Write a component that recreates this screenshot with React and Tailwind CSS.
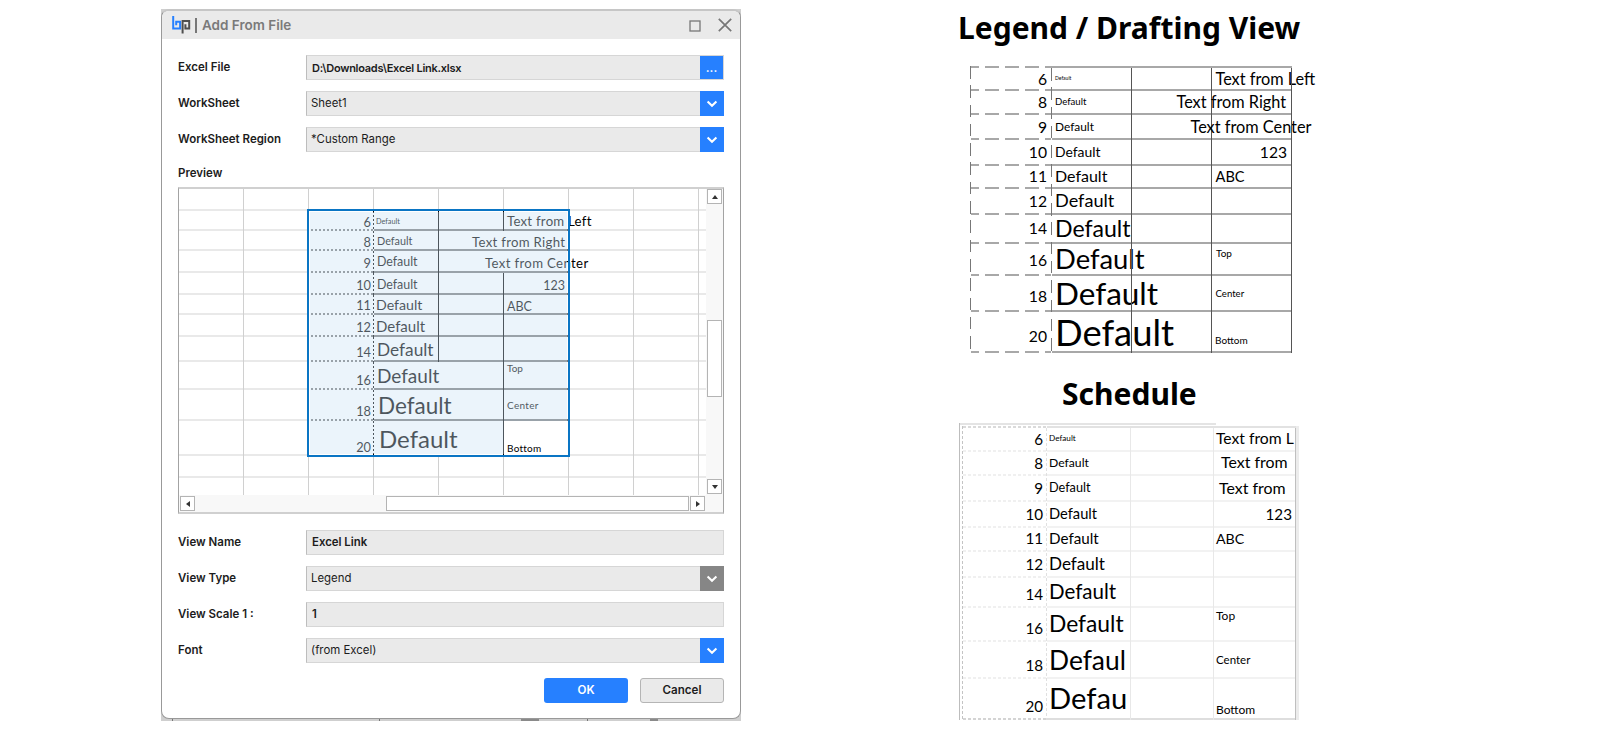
import React from "react";

/* ---------- generic sheet pieces ---------- */

// cell: { t: text, b: height class that sets the baseline, s: text classes }
function Cell({ h, hline, vline, cell }) {
  return (
    <div className={`flex shrink-0 ${h}`}>
      <div className="flex min-w-0 grow flex-col">
        <div className="flex min-h-0 grow items-baseline whitespace-nowrap leading-[0]">
          {cell && (
            <>
              <i className={`block w-0 shrink-0 ${cell.b}`} />
              <span className={`block shrink-0 ${cell.s}`}>{cell.t}</span>
            </>
          )}
        </div>
        <div className={`h-[2px] shrink-0 ${hline}`} />
      </div>
      {vline && <div className={`w-px shrink-0 ${vline}`} />}
    </div>
  );
}

function Column({ w, rows, cells = [], hline, vline, edge }) {
  const pick = (v, i) => (typeof v === "function" ? v(i) : v);
  return (
    <div className={`flex shrink-0 ${w}`}>
      <div className="flex min-w-0 grow flex-col">
        {rows.map((h, i) => (
          <Cell key={i} h={h} hline={pick(hline, i)} vline={pick(vline, i)} cell={cells[i]} />
        ))}
      </div>
      {edge && <div className={`w-px shrink-0 ${edge}`} />}
    </div>
  );
}

const NUM = ["6", "8", "9", "10", "11", "12", "14", "16", "18", "20"];
const build = (texts, bases, styles) =>
  texts.map((t, i) => (t ? { t, b: bases[i], s: Array.isArray(styles) ? styles[i] : styles } : null));

/* ---------- dialog preview ---------- */

const pRows = [
  "h-[22px]", "h-[20px]", "h-[20px]", "h-[22px]", "h-[22px]", "h-[20px]", "h-[22px]",
  "h-[25px]", "h-[28px]", "h-[31px]", "h-[35px]", "h-[22px]", "h-[17px]",
];
const pNums = [null, ...build(NUM,
  ["h-[16px]", "h-[16px]", "h-[17px]", "h-[17px]", "h-[15px]", "h-[17px]", "h-[20px]", "h-[23px]", "h-[26px]", "h-[31px]"],
  "ml-auto pr-[2px] text-[12.8px]")];
const pDefaults = [null, ...build(NUM.map(() => "Default"),
  ["h-[13px]", "h-[14px]", "h-[15px]", "h-[16px]", "h-[15px]", "h-[17px]", "h-[19px]", "h-[21px]", "h-[24px]", "h-[27px]"],
  [
    "pl-[2px] text-[7.3px]", "pl-[3px] text-[10.8px]", "pl-[3px] text-[12.4px]", "pl-[3px] text-[12.4px]",
    "pl-[2px] text-[14.2px]", "pl-[2px] text-[15px]", "pl-[3px] text-[17.3px]", "pl-[3px] text-[19px]",
    "pl-[4px] text-[22.5px]", "pl-[5px] text-[24px]",
  ])];
const pTexts = [null, ...build(
  ["Text from Left", "Text from Right", "Text from Center", "123", "ABC", "", "", "Top", "Center", "Bottom"],
  ["h-[15px]", "h-[16px]", "h-[17px]", "h-[17px]", "h-[16px]", "", "", "h-[10px]", "h-[19px]", "h-[31px]"],
  [
    "pl-[3px] text-[13.2px] tracking-[0.25px]",
    "ml-[-32px] text-[13.2px] tracking-[0.3px]",
    "ml-[-19px] text-[13.2px] tracking-[0.35px]",
    "ml-auto pr-[3px] text-[12.5px]",
    "pl-[3px] text-[12.5px]",
    "", "",
    "pl-[3px] text-[10px]",
    "pl-[3px] text-[10px] tracking-[0.3px]",
    "pl-[3px] text-[10px] tracking-[0.25px]",
  ])];

const gridV = "bg-[#d0d0d0]";
const gridH = "bg-[#e9e9e9]";
const solidH = "bg-[#7b7b7b]";
const dotH = "ml-[2px] bg-[repeating-linear-gradient(90deg,#7b7b7b_0_2px,transparent_2px_4px)]";
const dotV = "bg-[repeating-linear-gradient(180deg,#000_0_2px,transparent_2px_4px)]";
const inData = (i) => i >= 1 && i <= 10;
const blankLine = (i) => (i < 12 ? gridH : "");
const dataLine = (i) => (i >= 1 && i <= 9 ? solidH : i === 10 ? "" : blankLine(i));

function ScrollButton({ d }) {
  return (
    <div className="flex size-[15px] shrink-0 items-center justify-center border border-[#b4b4b4] bg-white">
      <svg viewBox="0 0 8 8" className="size-2 fill-[#333]">
        <path d={d} />
      </svg>
    </div>
  );
}

function Preview() {
  return (
    <div className="flex h-[327px] flex-col border-x border-y-2 border-x-[#a3a3a3] border-y-[#d0d0d0]">
      <div className="flex h-[306px]">
        <div className="relative flex w-[527px] overflow-hidden font-[Lato,sans-serif] text-black">
          <Column w="w-[65px]" rows={pRows} hline={blankLine} edge={gridV} />
          <Column w="w-[65px]" rows={pRows} hline={blankLine} edge={gridV} />
          <Column
            w="w-[65px]" rows={pRows} cells={pNums}
            hline={(i) => (i >= 1 && i <= 9 ? dotH : i === 10 ? "" : blankLine(i))}
            vline={(i) => (inData(i) ? dotV : gridV)}
          />
          <Column
            w="w-[65px]" rows={pRows} cells={pDefaults} hline={dataLine}
            vline={(i) => (i >= 1 && i <= 7 ? "bg-black" : inData(i) ? null : gridV)}
          />
          <Column
            w="w-[65px]" rows={pRows} hline={dataLine}
            vline={(i) => (i === 2 || i === 3 ? null : inData(i) ? "bg-black" : gridV)}
          />
          <Column
            w="w-[65px]" rows={pRows} cells={pTexts} hline={dataLine}
            vline={(i) => (inData(i) ? "bg-transparent" : gridV)}
          />
          <Column w="w-[65px]" rows={pRows} hline={blankLine} edge={gridV} />
          <Column w="w-[65px]" rows={pRows} hline={blankLine} edge={gridV} />
          <Column w="w-[7px]" rows={pRows} hline={blankLine} />
          <div className="absolute top-[20px] left-[128px] flex h-[248px] w-[263px] flex-col border-2 border-[#0a75c4] p-px">
            <div className="grow bg-[rgba(203,225,245,0.38)]" />
            <div className="h-[33px] w-[194px] bg-[rgba(203,225,245,0.38)]" />
          </div>
        </div>
        <div className="flex w-[17px] flex-col items-center bg-[#f8f8f8] pb-px">
          <ScrollButton d="M4 2 7 6H1z" />
          <div className="mt-[116px] h-[77px] w-[15px] border border-[#b4b4b4] bg-white" />
          <div className="grow" />
          <ScrollButton d="M4 6 1 2h6z" />
        </div>
      </div>
      <div className="flex h-[17px] items-center bg-[#f8f8f8] pl-px">
        <ScrollButton d="M2 4 6 1v6z" />
        <div className="ml-[191px] h-[15px] w-[303px] border border-[#b4b4b4] bg-white" />
        <div className="w-px" />
        <ScrollButton d="M6 4 2 1v6z" />
      </div>
    </div>
  );
}

/* ---------- dialog ---------- */

function Chevron() {
  return (
    <svg viewBox="0 0 12 8" className="h-2 w-3 fill-none stroke-white stroke-[2.1]">
      <path d="M1.6 1.6 6 5.8l4.4-4.2" />
    </svg>
  );
}

function Row({ label, value, bold, button, valueClass = "pl-[5px] text-[11.4px]" }) {
  return (
    <div className="flex h-[25px] items-center">
      <div className="w-[128px] shrink-0 pt-px text-[11.5px] font-semibold text-[#1c1c1c]">{label}</div>
      <div className="flex h-[25px] grow border border-[#d6d6d6] border-l-[#bdbdbd] bg-[#eaeaea]">
        <div className={`flex grow items-center pt-px text-[#1c1c1c] ${bold ? "font-semibold" : ""} ${valueClass}`}>
          {value}
        </div>
        {button === "dots" && (
          <div className="flex h-[23px] w-[23px] items-center justify-center bg-[#2680ff] text-[12px] font-semibold text-white">
            ...
          </div>
        )}
        {button === "blue" && (
          <div className="-my-px -mr-px flex w-6 items-center justify-center bg-[#2680ff]">
            <Chevron />
          </div>
        )}
        {button === "gray" && (
          <div className="-my-px -mr-px flex w-6 items-center justify-center bg-[#868686]">
            <Chevron />
          </div>
        )}
      </div>
    </div>
  );
}

function Logo() {
  return (
    <svg viewBox="0 0 19 18" className="h-[18px] w-[19px] fill-none">
      <path d="M1.2 0v12.6h6.9V5.7H4.2v3.6" stroke="#2680ff" strokeWidth="2" />
      <path d="M10.6 17.5V5h6.6v7.4h-3.8V8.2" stroke="#4f4f4f" strokeWidth="2" />
    </svg>
  );
}

const plain = "pl-1 text-[11.4px]";

function Dialog() {
  return (
    <div className="flex h-[712px] w-[580px] flex-col bg-[#cfcfcf] font-[Inter,sans-serif]">
      <div className="flex h-[710px] flex-col overflow-hidden rounded-[8px] border border-t-2 border-[#999] border-t-[#c6c6c6] bg-white">
        <div className="flex h-[28px] shrink-0 items-center bg-[#eaeaea] pl-[10px] pr-[8px]">
          <Logo />
          <div className="ml-[4px] h-[15px] w-[1.5px] bg-[#777]" />
          <div className="ml-[5.5px] grow pt-px text-[13.5px] leading-none font-semibold text-[#7a7a7a]">Add From File</div>
          <svg viewBox="0 0 12 12" className="mt-px size-3 fill-none stroke-[#777] stroke-[1.3]">
            <rect x="1" y="1" width="10" height="10" />
          </svg>
          <svg viewBox="0 0 14 14" className="-mt-px ml-[17px] size-[14px] fill-none stroke-[#777] stroke-[1.7]">
            <path d="M.8.8 13.2 13.2M13.2.8.8 13.2" />
          </svg>
        </div>
        <div className="flex flex-col px-4 pt-4">
          <div className="flex flex-col gap-[11px]">
            <Row label="Excel File" value="D:\Downloads\Excel Link.xlsx" bold button="dots" valueClass="pl-[5px] text-[11px] tracking-[-0.25px]" />
            <Row label="WorkSheet" value="Sheet1" button="blue" valueClass={plain} />
            <Row label="WorkSheet Region" value="*Custom Range" button="blue" valueClass={plain} />
          </div>
          <div className="flex h-[35px] items-center pt-[9px] text-[11.5px] font-semibold text-[#1c1c1c]">Preview</div>
          <Preview />
          <div className="mt-4 flex flex-col gap-[11px]">
            <Row label="View Name" value="Excel Link" bold />
            <Row label="View Type" value="Legend" button="gray" valueClass={plain} />
            <Row label="View Scale 1 :" value="1" bold />
            <Row label="Font" value="(from Excel)" button="blue" valueClass={plain} />
          </div>
          <div className="mt-[15px] flex justify-end gap-3">
            <button className="h-[25px] w-[84px] rounded-[3px] bg-[#2680ff] text-[11.6px] font-semibold text-white">OK</button>
            <button className="h-[25px] w-[84px] rounded-[3px] border border-[#b5b5b5] bg-[#eaeaea] text-[11.6px] font-semibold text-[#1c1c1c]">Cancel</button>
          </div>
        </div>
      </div>
      <div className="flex h-[2px]">
        <div className="ml-[11px] w-px bg-[#777]" />
        <div className="ml-[206px] w-px bg-[#777]" />
        <div className="ml-[141px] w-[18px] bg-[#8a8a8a]" />
        <div className="ml-[48px] w-px bg-[#777]" />
        <div className="ml-[62px] w-[8px] bg-[#8a8a8a]" />
      </div>
    </div>
  );
}

/* ---------- legend ---------- */

const lRows = [
  "h-[23px]", "h-[24px]", "h-[25px]", "h-[26px]", "h-[23px]",
  "h-[26px]", "h-[29px]", "h-[32px]", "h-[36px]", "h-[41px]",
];
const lNums = build(NUM,
  ["h-[17px]", "h-[17px]", "h-[18px]", "h-[18px]", "h-[16px]", "h-[18px]", "h-[19px]", "h-[22px]", "h-[26px]", "h-[30px]"],
  "ml-auto pr-[4px] text-[15.7px]");
const lDefaults = build(NUM.map(() => "Default"),
  ["h-[12px]", "h-[14px]", "h-[16px]", "h-[17px]", "h-[16px]", "h-[18px]", "h-[22px]", "h-[25px]", "h-[29px]", "h-[34px]"],
  [
    "pl-[3px] text-[5px]", "pl-[3px] text-[9.6px]", "pl-[3px] text-[11.9px]", "pl-[3px] text-[13.9px]", "pl-[3px] text-[16px]",
    "pl-[3px] text-[18.1px]", "pl-[3px] text-[23.1px]", "pl-[3px] text-[27.4px]", "pl-[3px] text-[31.5px]", "pl-[3px] text-[36.4px]",
  ]);
const lTexts = build(
  ["Text from Left", "Text from Right", "Text from Center", "123", "ABC", "", "", "Top", "Center", "Bottom"],
  ["h-[17px]", "h-[17px]", "h-[18px]", "h-[18px]", "h-[16px]", "", "", "h-[13px]", "h-[21px]", "h-[32px]"],
  [
    "pl-[3.5px] text-[16.3px]", "ml-[-35.5px] text-[16.3px]", "ml-[-21.5px] text-[16.3px]",
    "ml-auto pr-[4px] text-[15.6px]", "pl-[3.5px] text-[14.6px]", "", "",
    "pl-[4px] text-[10px]", "pl-[3.5px] text-[9.6px]", "pl-[3px] text-[10px]",
  ]);
const lLine = "bg-[#a8a8a8]";
const lV = "bg-[#555]";
const lDashH = "bg-[repeating-linear-gradient(90deg,#a8a8a8_0_8px,transparent_8px_14px,#a8a8a8_14px_20px)]";
const lDashV = "bg-[repeating-linear-gradient(180deg,#777_0_12.5px,transparent_12.5px_19.3px)]";

function Legend() {
  return (
    <div className="flex w-[321px] font-[Lato,sans-serif] text-black">
      <div className={`w-px shrink-0 ${lDashV}`} />
      <div className="flex flex-col">
        <div className="flex h-[2px]">
          <div className={`w-[80px] shrink-0 ${lDashH}`} />
          <div className={`w-[241px] shrink-0 ${lLine}`} />
        </div>
        <div className="flex">
          <Column w="w-[81px]" rows={lRows} cells={lNums} hline={lDashH} edge={lDashV} />
          <Column w="w-[80px]" rows={lRows} cells={lDefaults} hline={lLine} edge={lV} />
          <Column w="w-[80px]" rows={lRows} hline={lLine} edge={lV} />
          <Column w="w-[80px]" rows={lRows} cells={lTexts} hline={lLine} edge={lV} />
        </div>
      </div>
    </div>
  );
}

/* ---------- schedule ---------- */

const sRows = [
  "h-[24px]", "h-[24px]", "h-[26px]", "h-[26px]", "h-[24px]",
  "h-[26px]", "h-[30px]", "h-[34px]", "h-[37px]", "h-[41px]",
];
const sNums = build(NUM,
  ["h-[17px]", "h-[17px]", "h-[18px]", "h-[18px]", "h-[16px]", "h-[18px]", "h-[22px]", "h-[26px]", "h-[29px]", "h-[33px]"],
  "ml-auto pr-[3px] text-[15.2px]");
const sDefaults = build(
  ["Default", "Default", "Default", "Default", "Default", "Default", "Default", "Default", "Defaul", "Defau"],
  ["h-[13px]", "h-[15px]", "h-[16px]", "h-[17px]", "h-[16px]", "h-[18px]", "h-[21px]", "h-[24px]", "h-[28px]", "h-[30px]"],
  [
    "pl-[2px] text-[8.2px]", "pl-[2px] text-[12.2px]", "pl-[2px] text-[12.7px]", "pl-[2px] text-[14.7px]", "pl-[2px] text-[15.2px]",
    "pl-[2px] text-[17.1px]", "pl-[2px] text-[20.5px]", "pl-[2px] text-[22.8px]", "pl-[2px] text-[26.4px]", "pl-[2px] text-[29.2px]",
  ]);
const sTexts = build(
  ["Text from L", "Text from", "Text from", "123", "ABC", "", "", "Top", "Center", "Bottom"],
  ["h-[16px]", "h-[16px]", "h-[18px]", "h-[18px]", "h-[16px]", "", "", "h-[12px]", "h-[22px]", "h-[35px]"],
  [
    "pl-[2px] text-[15.7px]", "pl-[7px] text-[15.9px]", "pl-[5px] text-[15.9px]",
    "ml-auto pr-[3px] text-[15.2px]", "pl-[2px] text-[14.2px]", "", "",
    "pl-[2px] text-[12px]", "pl-[2px] text-[11.5px]", "pl-[2px] text-[12px]",
  ]);
const sLine = (i) => (i === 9 ? "bg-[#dedede]" : "bg-[#f2f2f2]");
const sDash = (i) =>
  i === 9
    ? "bg-[repeating-linear-gradient(90deg,#d4d4d4_0_3px,transparent_3px_5px)]"
    : "bg-[repeating-linear-gradient(90deg,#f0f0f0_0_3px,transparent_3px_5px)]";
const sDashV = "bg-[repeating-linear-gradient(180deg,#e0e0e0_0_3px,transparent_3px_5px)]";

function Schedule() {
  return (
    <div className="flex w-[340px] font-[Lato,sans-serif] text-black">
      <div className="w-px shrink-0 bg-[#bdbdbd]" />
      <div className="flex flex-col">
        <div className="mb-px h-[2px] w-[256px] bg-[#e4e4e4]" />
        <div className="flex pl-[2px]">
          <div className="w-px shrink-0 bg-[repeating-linear-gradient(180deg,#c4c4c4_0_3px,transparent_3px_5px)]" />
          <div className="flex flex-col">
            <div className="flex h-[2px]">
              <div className="w-[84px] bg-[repeating-linear-gradient(90deg,#dadada_0_3px,transparent_3px_5px)]" />
              <div className="grow bg-[#e2e2e2]" />
            </div>
            <div className="flex">
              <Column w="w-[84px]" rows={sRows} cells={sNums} hline={sDash} edge={sDashV} />
              <Column w="w-[84px]" rows={sRows} cells={sDefaults} hline={sLine} edge="bg-[#e8e8e8]" />
              <Column w="w-[83px]" rows={sRows} hline={sLine} edge="bg-[#e8e8e8]" />
              <Column w="w-[82px]" rows={sRows} cells={sTexts} hline={sLine} edge="bg-[#bfbfbf]" />
            </div>
          </div>
          <div className="w-[3px] shrink-0 bg-[#ececec]" />
        </div>
      </div>
    </div>
  );
}

export default function App() {
  return (
    <div className="flex h-[739px] w-[1600px] overflow-hidden bg-white pl-[161px]">
      <div className="shrink-0 pt-[9px]">
        <Dialog />
      </div>
      <div className="ml-[217px] flex shrink-0 flex-col items-start pt-[13px]">
        <h1 className="font-['Noto_Sans',sans-serif] text-[30px] leading-none font-bold whitespace-nowrap text-black">
          Legend / Drafting View
        </h1>
        <div className="mt-[23px] ml-[12px]">
          <Legend />
        </div>
        <h1 className="mt-[26px] ml-[104px] font-['Noto_Sans',sans-serif] text-[30px] leading-none font-bold text-black">
          Schedule
        </h1>
        <div className="mt-[14px] ml-px">
          <Schedule />
        </div>
      </div>
    </div>
  );
}
